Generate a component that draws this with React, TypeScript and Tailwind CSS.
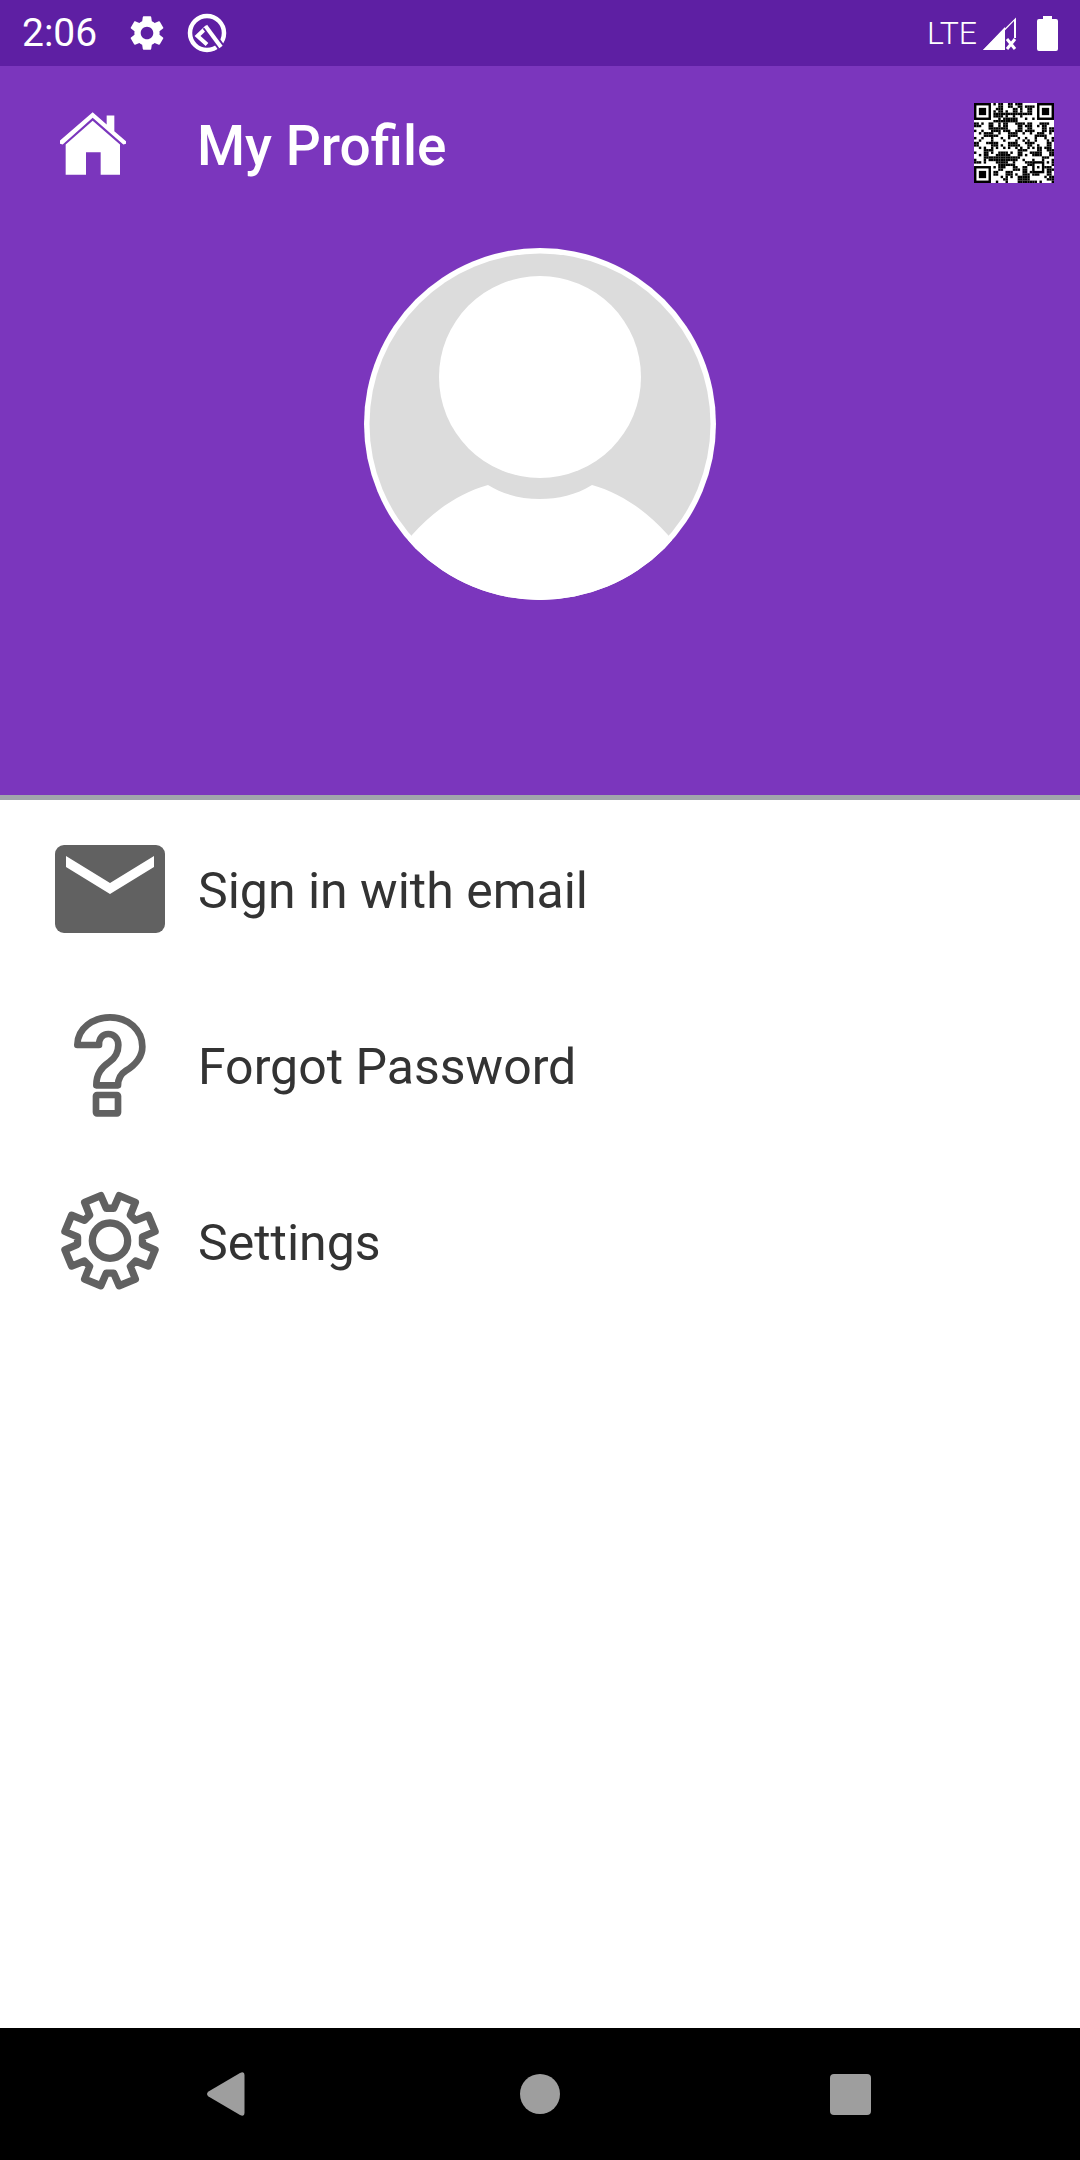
import { MdSettings } from "react-icons/md";

// finder-free cells are filled from a small hash so the code looks like a real one
const QR_SIZE = 33;

function isReserved(x: number, y: number) {
  const inBox = (cx: number, cy: number, size: number) =>
    x >= cx && x < cx + size && y >= cy && y < cy + size;
  return (
    inBox(0, 0, 8) || inBox(25, 0, 8) || inBox(0, 25, 8) || inBox(24, 24, 5)
  );
}

function hash(x: number, y: number) {
  return (x * 7919 + y * 104729 + x * y * 31 + 17) % 97;
}

function qrCells() {
  const cells: [number, number][] = [];
  for (let y = 0; y < QR_SIZE; y++) {
    for (let x = 0; x < QR_SIZE; x++) {
      if (isReserved(x, y)) continue;
      const block = hash(x >> 1, y >> 1) % 3 === 0;
      if (block || hash(x, y) % 4 === 0) cells.push([x, y]);
    }
  }
  return cells;
}

function gearPath() {
  const cx = 240;
  const cy = 212;
  const points: string[] = [];
  for (let k = 0; k < 8; k++) {
    const a = 22.5 + 45 * k;
    for (const [off, r] of [
      [-16, 98],
      [-11, 138],
      [11, 138],
      [16, 98],
    ]) {
      const rad = ((a + off - 90) * Math.PI) / 180;
      points.push(`${cx + r * Math.cos(rad)},${cy + r * Math.sin(rad)}`);
    }
  }
  return `M${points.join(" L")} Z`;
}

function QrCode() {
  const finders = [
    [0, 0],
    [26, 0],
    [0, 26],
  ];
  return (
    <svg width="80" height="80" viewBox="0 0 33 33" className="block shrink-0">
      <rect width="33" height="33" fill="#fff" />
      {qrCells().map(([x, y]) => (
        <rect key={`${x}-${y}`} x={x} y={y} width="1" height="1" fill="#000" />
      ))}
      {finders.map(([x, y]) => (
        <g key={`${x}-${y}`}>
          <rect x={x} y={y} width="7" height="7" fill="#000" />
          <rect x={x + 1} y={y + 1} width="5" height="5" fill="#fff" />
          <rect x={x + 2} y={y + 2} width="3" height="3" fill="#000" />
        </g>
      ))}
      <rect x="24" y="24" width="5" height="5" fill="#000" />
      <rect x="25" y="25" width="3" height="3" fill="#fff" />
      <rect x="26" y="26" width="1" height="1" fill="#000" />
    </svg>
  );
}

function StatusBar() {
  return (
    <div className="flex h-[66px] items-center bg-[#5e1fa3] pl-[22px] pr-[22px] text-white">
      <span className="w-[104px] text-[39px] leading-none">2:06</span>
      <MdSettings size={42} className="shrink-0" />
      <svg width="40" height="40" viewBox="0 0 40 40" className="ml-[19px] shrink-0">
        <circle cx="20" cy="20" r="17" fill="none" stroke="#fff" strokeWidth="4.5" />
        <path d="M20 14 L10.5 23 L20 31.5" fill="none" stroke="#fff" strokeWidth="4" />
        <path d="M19 13.5 L34 34" stroke="#5e1fa3" strokeWidth="8" />
        <path d="M18.5 13 L34 34" stroke="#fff" strokeWidth="4" />
      </svg>
      <span className="ml-auto text-[32px] font-light leading-none">LTE</span>
      <svg width="34" height="34" viewBox="0 0 34 34" className="ml-[6px] shrink-0">
        <path d="M33 1.5 V22 H31 V5 L5 32 H20 V34 H0 Z" fill="#fff" />
        <path d="M0 34 L22 11 V34 Z" fill="#fff" />
        <path d="M24 23 L32 33 M32 23 L24 33" stroke="#fff" strokeWidth="3" />
      </svg>
      <svg width="21" height="35" viewBox="0 0 21 35" className="ml-[20px] shrink-0">
        <path d="M6 0 H15 V3 H19 Q21 3 21 5 V33 Q21 35 19 35 H2 Q0 35 0 33 V5 Q0 3 2 3 H6 Z" fill="#fff" />
      </svg>
    </div>
  );
}

function Avatar() {
  return (
    <svg width="352" height="352" viewBox="0 0 352 352" className="block">
      <defs>
        <clipPath id="avatar-clip">
          <circle cx="176" cy="176" r="176" />
        </clipPath>
      </defs>
      <circle cx="176" cy="176" r="176" fill="#fff" />
      <circle cx="176" cy="176" r="170.5" fill="#dcdcdc" />
      <circle cx="176" cy="129" r="101" fill="#fff" />
      <path
        d="M48 287 C70 262 96 245 124 237 C140 247 158 251 176 251 C194 251 212 247 228 237 C256 245 282 262 304 287 L352 352 L0 352 Z"
        fill="#fff"
        clipPath="url(#avatar-clip)"
      />
    </svg>
  );
}

function Header() {
  return (
    <div className="h-[734px] border-b-[5px] border-[#a1a4ac] bg-[#7b36bd]">
      <div className="flex h-[154px] items-center pl-[60px] pr-[26px]">
        <svg width="66" height="63" viewBox="180 335 198 188" className="shrink-0">
          <path
            d="M278 335 L320 372 V345 H343 V392 L378 422 V430 L370 432 L278 352 L188 432 L180 430 V420 Z"
            fill="#fff"
          />
          <path
            d="M278 361 L360 432 V523 H302 V455 H258 V523 H197 V432 Z"
            fill="#fff"
          />
        </svg>
        <h1 className="ml-[71px] mt-[6px] text-[55px] font-medium leading-none text-white">
          My Profile
        </h1>
        <div className="ml-auto">
          <QrCode />
        </div>
      </div>
      <div className="mt-[28px] flex justify-center">
        <Avatar />
      </div>
    </div>
  );
}

function MailIcon() {
  return (
    <svg width="110" height="88" viewBox="0 0 110 88" className="mb-[2px]">
      <rect width="110" height="88" rx="9" fill="#616161" />
      <path d="M11 11 L55 38 L99 11 V22 L55 49 L11 22 Z" fill="#fff" />
    </svg>
  );
}

function QuestionIcon() {
  return (
    <svg width="110" height="110" viewBox="75 63 330 330">
      <g fill="none" stroke="#616161" strokeWidth="20" strokeLinejoin="round">
        <path d="M142 165 C142 115 190 82 240 82 C295 82 337 120 337 170 C337 205 310 228 288 242 C272 252 264 265 264 286 H199 C199 250 215 232 238 216 C254 205 265 190 265 165 C265 145 252 132 235 132 C218 132 207 145 207 165 Z" />
        <rect x="198" y="315" width="66" height="55" rx="3" />
      </g>
    </svg>
  );
}

function GearIcon() {
  return (
    <svg width="110" height="110" viewBox="75 51 330 330">
      <g fill="none" stroke="#616161" strokeWidth="22" strokeLinejoin="round">
        <path d={gearPath()} />
        <circle cx="240" cy="212" r="53" />
      </g>
    </svg>
  );
}

const menuItems = [
  { label: "Sign in with email", icon: <MailIcon /> },
  { label: "Forgot Password", icon: <QuestionIcon /> },
  { label: "Settings", icon: <GearIcon /> },
];

function NavBar() {
  return (
    <div className="flex h-[132px] items-center bg-black pl-[206px]">
      <svg width="39" height="44" viewBox="0 0 38 44" className="shrink-0">
        <path
          d="M2 19.5 L33.5 1 Q38 -1 38 3 V41 Q38 45 33.5 43 L2 24.5 Q-1 22 2 19.5 Z"
          fill="#9e9e9e"
        />
      </svg>
      <div className="ml-[275px] h-10 w-10 rounded-full bg-[#9e9e9e]" />
      <div className="ml-[270px] h-[41px] w-[41px] rounded bg-[#9e9e9e]" />
    </div>
  );
}

export default function App() {
  return (
    <div className="flex h-[2160px] w-[1080px] flex-col bg-white font-['Roboto',sans-serif]">
      <StatusBar />
      <Header />
      <div className="flex-1 pt-[2px]">
        {menuItems.map((item) => (
          <div key={item.label} className="flex h-[176px] items-center pl-[55px]">
            <div className="flex w-[110px] shrink-0 justify-center">{item.icon}</div>
            <span className="ml-[33px] pt-[2px] text-[50px] leading-none text-[#333333]">
              {item.label}
            </span>
          </div>
        ))}
      </div>
      <NavBar />
    </div>
  );
}
